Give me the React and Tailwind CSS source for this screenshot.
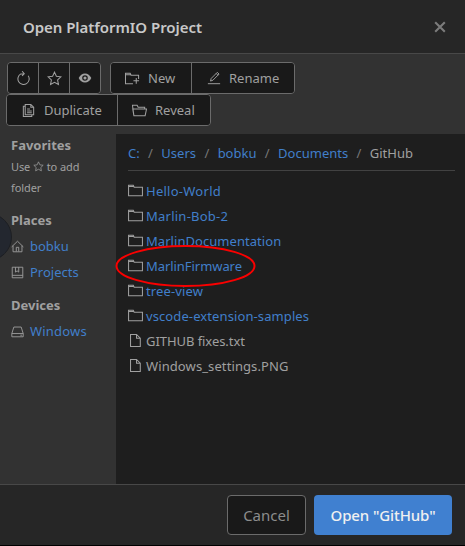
function Icon({ d, className = '', children }) {
  return (
    <svg viewBox="0 0 16 16" fill="none" stroke="currentColor" strokeWidth="1.1" className={`shrink-0 ${className}`}>
      {d && <path d={d} />}
      {children}
    </svg>
  )
}

const STAR = 'M8 1.2l2 4.400 4.800.6-3.500 3.300.9 4.800L8 12l-4.200 2.300.9-4.800-3.500-3.300 4.800-.6z'

const folders = [
  { name: 'Hello-World', tracking: 'tracking-[0.26px]' },
  { name: 'Marlin-Bob-2', tracking: 'tracking-[0.24px]' },
  { name: 'MarlinDocumentation', tracking: 'tracking-[0.05px]' },
  { name: 'MarlinFirmware', tracking: 'tracking-[-0.06px]' },
  { name: 'tree-view', tracking: 'tracking-[0.12px]' },
  { name: 'vscode-extension-samples', tracking: 'tracking-[0.1px]' },
]
const files = [
  { name: 'GITHUB fixes.txt', tracking: 'tracking-[-0.06px]' },
  { name: 'Windows_settings.PNG', tracking: 'tracking-[0.1px]' },
]
const crumbs = ['C:', 'Users', 'bobku', 'Documents']

function Button({ className = '', children }) {
  return <button className={`flex h-full items-center border-[#6b6b6b] bg-[#191919] ${className}`}>{children}</button>
}

function Group({ className = '', children }) {
  return <div className={`flex h-8 overflow-hidden rounded border border-[#6b6b6b] ${className}`}>{children}</div>
}

function Place({ label, className = '', children }) {
  return (
    <div className={`flex h-[26px] items-center text-[#417fca] ${className}`}>
      <span className="mr-[5px] flex w-[14px] text-[#a0a0a0]">{children}</span>
      {label}
    </div>
  )
}

export default function App() {
  return (
    <div className="relative flex h-[546px] w-[465px] flex-col overflow-hidden border-b border-black bg-[#323232] font-['Noto_Sans',sans-serif] text-[13px] leading-5 text-[#a0a0a0]">
      <header className="flex h-[54px] shrink-0 items-center justify-between border-b border-[#484848] bg-[#262626] pr-[18px] pl-[23px]">
        <h1 className="text-[15px] font-semibold tracking-[-0.05px] text-[#c8c8c8]">Open PlatformIO Project</h1>
        <Icon d="M2.500 2.500l11 11M13.500 2.500l-11 11" className="size-[14px] stroke-[2.4] text-[#7b7b7b]" />
      </header>

      <div className="flex h-[80px] shrink-0 flex-col pt-2">
        <div className="flex gap-[9px] pl-[7px]">
          <Group className="w-[94px]">
            <Button className="w-[31px] justify-center border-r">
              <Icon className="size-[15px]">
                <path d="M5.200 3.100A6 6 0 1 0 13 5M4.800 3.300L8.500 3M6.500.3l2.300 2.600-2.300 2.300" />
              </Icon>
            </Button>
            <Button className="w-[31px] justify-center border-r">
              <Icon d={STAR} className="size-[15px]" />
            </Button>
            <Button className="w-[30px] justify-center">
              <Icon className="size-[14px]">
                <path fill="currentColor" stroke="none" fillRule="evenodd" d="M.8 8c1.500-3.200 4-5.200 7.200-5.200s5.700 2 7.200 5.200c-1.500 3.200-4 5.200-7.200 5.200S2.300 11.200.8 8zM8 4.800a3.200 3.200 0 1 0 0 6.400 3.200 3.200 0 0 0 0-6.400z" />
                <circle cx="8" cy="8" r="1.800" fill="currentColor" stroke="none" />
              </Icon>
            </Button>
          </Group>
          <Group className="w-[185px]">
            <Button className="w-[81px] gap-2 border-r pl-[14px]">
              <Icon className="size-[15px]">
                <path d="M8.500 13.500h-8v-11h5l1 2h8v4M.5 4h6M9 10.500h6M12 7.500v6" />
              </Icon>
              New
            </Button>
            <Button className="flex-1 gap-2 pl-[15px]">
              <Icon d="M1 14.500h14M4 11.500l.8-3 7-7 2 2-7 7zM10.500 2.800l2 2" className="size-[14px]" />
              Rename
            </Button>
          </Group>
        </div>
        <div className="flex pl-1.5">
          <Group className="w-[205px]">
            <Button className="w-[111px] gap-2 border-r pl-[14px]">
              <Icon className="size-[15px]">
                <path d="M4.500 1.500h6l3 3v8h-9zM10.500 1.500v3h3M4.500 3.500h-2v11h9v-2M6.500 6.500h3M6.500 8.500h5M6.500 10.500h5" />
              </Icon>
              Duplicate
            </Button>
            <Button className="flex-1 gap-2 pl-[14px]">
              <Icon d="M2 13.500l-1.500-11h5l1 2h7v2M.8 6.500h14.700l-1.500 7H2z" className="size-[15px]" />
              Reveal
            </Button>
          </Group>
        </div>
      </div>

      <div className="flex h-[350px] shrink-0">
        <aside className="w-[116px] pl-[11px]">
          <h2 className="h-[22px] font-bold leading-[22px]">Favorites</h2>
          <p className="text-[11px] leading-[21px] tracking-[-0.1px]">
            Use <Icon d={STAR} className="inline size-[11px] align-[-1px]" /> to add
            <br />
            folder
          </p>
          <h2 className="mt-[11px] h-6 font-bold leading-[22px]">Places</h2>
          <Place label="bobku">
            <Icon d="M.8 8.500L8 1.500l7.200 7M2.500 7v7.500h11V7M6.500 14v-5h3v5" className="size-[13px]" />
          </Place>
          <Place label="Projects">
            <Icon d="M1.500 1.500h13v13h-13zM1.500 11.500h13M5.500 1.500v6l2-1.500 2 1.500v-6" className="size-[13px]" />
          </Place>
          <h2 className="mt-[9px] h-6 font-bold leading-[22px]">Devices</h2>
          <Place label="Windows" className="tracking-[0.2px]">
            <Icon d="M1 10.500l2.500-8h9l2.500 8v4H1zM1 10.500h14M11.500 12.500h2" className="size-[13px]" />
          </Place>
        </aside>
        <main className="flex-1 bg-[#1e1e1e] pt-[9px] pr-[10px] pl-3">
          <nav className="flex h-7 border-b border-[#424242]">
            {crumbs.map((name) => (
              <span key={name} className="flex text-[#417fca]">
                {name}
                <span className="mx-[8.4px] text-[#777777]">/</span>
              </span>
            ))}
            <span>GitHub</span>
          </nav>
          <ul className="pt-[7px]">
            {folders.map(({ name, tracking }) => (
              <li key={name} className={`flex h-[25px] items-center gap-[3px] text-[#417fca] ${tracking}`}>
                <Icon d="M.6 13.500v-11h5l1 2h8.800v9zM.6 3.800h5.700" className="size-[15px] text-[#a0a0a0]" />
                {name}
              </li>
            ))}
            {files.map(({ name, tracking }) => (
              <li key={name} className={`flex h-[25px] items-center gap-[3px] ${tracking}`}>
                <Icon d="M2.700 1.500h6.400l4 4v9H2.700zM9.100 1.500v4h4" className="size-[15px]" />
                {name}
              </li>
            ))}
          </ul>
        </main>
      </div>

      <footer className="flex flex-1 items-start justify-end gap-2 border-t border-[#484848] bg-[#262626] pt-2.5 pr-[13px] text-[15px]">
        <button className="h-10 w-[79px] rounded border border-[#6b6b6b] bg-[#191919] text-[#8c8c8c]">Cancel</button>
        <button className="h-10 w-[138px] rounded bg-[#4080d0] font-medium tracking-[-0.1px] text-[#f0f0f0]">Open "GitHub"</button>
      </footer>

      <div className="absolute top-[213px] -left-[36px] size-12 rounded-full border border-[#1d1f23] bg-[#23272f]" />
      <svg className="absolute top-[243px] left-[114px] h-[46px] w-[144px]" viewBox="0 0 144 46">
        <ellipse cx="71.500" cy="23" rx="69" ry="20" fill="none" stroke="#fa0000" strokeWidth="2" />
      </svg>
    </div>
  )
}
